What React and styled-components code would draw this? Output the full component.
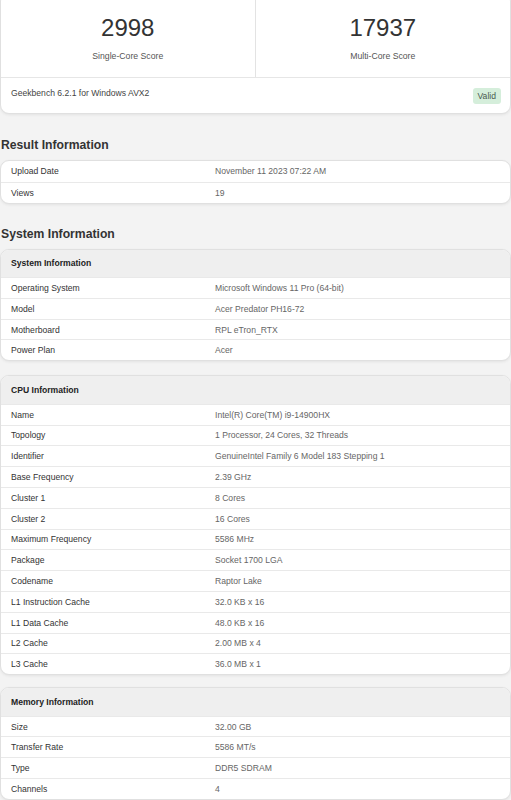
import styled, { createGlobalStyle } from "styled-components";

const Global = createGlobalStyle`
  html, body {
    margin: 0;
    padding: 0;
    background: #f3f3f3;
  }
  body {
    font-family: "Liberation Sans", Arial, sans-serif;
    color: #333;
  }
`;

const Page = styled.div`
  width: 511px;
  overflow: hidden;
  padding-bottom: 20px;
`;

const Card = styled.div`
  background: #fff;
  border: 1px solid #e0e0e0;
  border-radius: 9px;
  box-shadow: 0 1px 3px rgba(0, 0, 0, 0.07);
  overflow: hidden;
  margin: ${(p) => p.$margin || "0"};
`;

const TopCard = styled(Card)`
  margin-top: -8px;
`;

const ScoreGrid = styled.div`
  display: grid;
  grid-template-columns: 1fr 1fr;
  border-bottom: 1px solid #e6e6e6;
`;

const ScoreCell = styled.div`
  text-align: center;
  padding: 21px 0 15px;
  border-right: ${(p) => (p.$first ? "1px solid #e3e3e3" : "none")};
`;

const Score = styled.div`
  font-size: 24px;
  line-height: 28px;
  color: #333;
`;

const ScoreLabel = styled.div`
  font-size: 8.7px;
  line-height: 12px;
  margin-top: 8px;
  color: #555;
`;

const VersionRow = styled.div`
  display: flex;
  justify-content: space-between;
  align-items: flex-start;
  padding: 10px 9px 0 10px;
  height: 35px;
  box-sizing: border-box;
  font-size: 8.6px;
  color: #444;
`;

const Badge = styled.span`
  background: #d5eedb;
  color: #4a5a4e;
  font-size: 8.6px;
  line-height: 16px;
  padding: 0 5px;
  border-radius: 3px;
`;

const SectionTitle = styled.h2`
  font-size: 12.2px;
  line-height: 16px;
  font-weight: bold;
  color: #333;
  margin: ${(p) => p.$margin};
  padding-left: 1px;
`;

const Header = styled.div`
  background: #efefef;
  height: 27.5px;
  display: flex;
  align-items: center;
  padding-left: 10px;
  font-size: 8.6px;
  font-weight: bold;
  color: #222;
`;

const Row = styled.div`
  display: grid;
  grid-template-columns: 204px 1fr;
  align-items: center;
  height: 20.8px;
  box-sizing: border-box;
  padding-left: 10px;
  font-size: 8.6px;
  border-top: ${(p) => (p.$first ? "none" : "1px solid #e9e9e9")};
`;

const Label = styled.span`
  color: #333;
`;

const Value = styled.span`
  color: #666;
`;

const InfoCard = ({ title, rows, margin }) => (
  <Card $margin={margin}>
    {title && <Header>{title}</Header>}
    {rows.map(([k, v], i) => (
      <Row key={k} $first={i === 0 && !title}>
        <Label>{k}</Label>
        <Value>{v}</Value>
      </Row>
    ))}
  </Card>
);

const result = [
  ["Upload Date", "November 11 2023 07:22 AM"],
  ["Views", "19"],
];

const system = [
  ["Operating System", "Microsoft Windows 11 Pro (64-bit)"],
  ["Model", "Acer Predator PH16-72"],
  ["Motherboard", "RPL eTron_RTX"],
  ["Power Plan", "Acer"],
];

const cpu = [
  ["Name", "Intel(R) Core(TM) i9-14900HX"],
  ["Topology", "1 Processor, 24 Cores, 32 Threads"],
  ["Identifier", "GenuineIntel Family 6 Model 183 Stepping 1"],
  ["Base Frequency", "2.39 GHz"],
  ["Cluster 1", "8 Cores"],
  ["Cluster 2", "16 Cores"],
  ["Maximum Frequency", "5586 MHz"],
  ["Package", "Socket 1700 LGA"],
  ["Codename", "Raptor Lake"],
  ["L1 Instruction Cache", "32.0 KB x 16"],
  ["L1 Data Cache", "48.0 KB x 16"],
  ["L2 Cache", "2.00 MB x 4"],
  ["L3 Cache", "36.0 MB x 1"],
];

const memory = [
  ["Size", "32.00 GB"],
  ["Transfer Rate", "5586 MT/s"],
  ["Type", "DDR5 SDRAM"],
  ["Channels", "4"],
];

export default function App() {
  return (
    <Page>
      <Global />
      <TopCard>
        <ScoreGrid>
          <ScoreCell $first>
            <Score>2998</Score>
            <ScoreLabel>Single-Core Score</ScoreLabel>
          </ScoreCell>
          <ScoreCell>
            <Score>17937</Score>
            <ScoreLabel>Multi-Core Score</ScoreLabel>
          </ScoreCell>
        </ScoreGrid>
        <VersionRow>
          <span>Geekbench 6.2.1 for Windows AVX2</span>
          <Badge>Valid</Badge>
        </VersionRow>
      </TopCard>

      <SectionTitle $margin="23px 0 7px">Result Information</SectionTitle>
      <InfoCard rows={result} />

      <SectionTitle $margin="22px 0 7px">System Information</SectionTitle>
      <InfoCard title="System Information" rows={system} />
      <InfoCard title="CPU Information" rows={cpu} margin="14px 0 0" />
      <InfoCard title="Memory Information" rows={memory} margin="12px 0 0" />
    </Page>
  );
}
